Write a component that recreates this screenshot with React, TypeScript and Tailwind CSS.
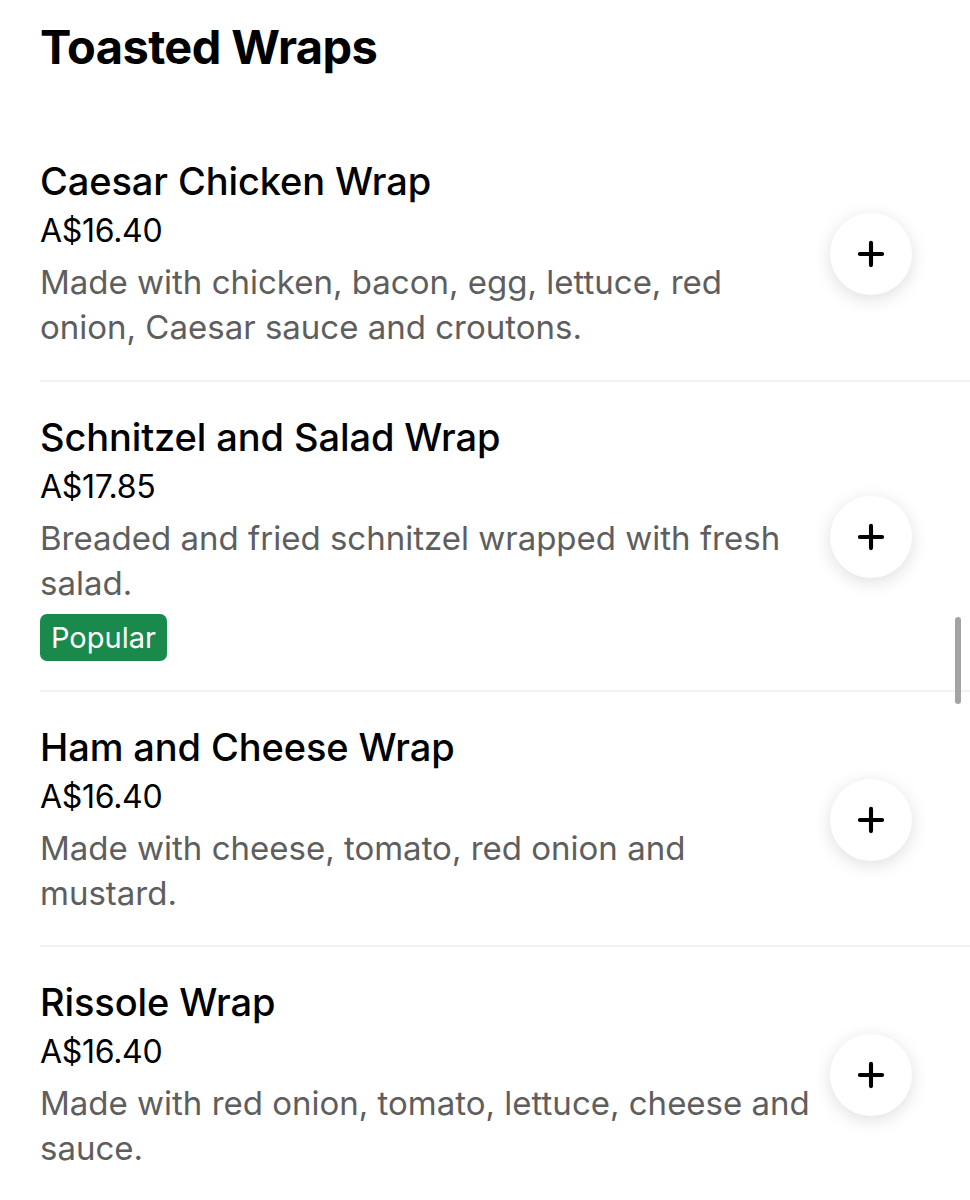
import { Plus } from "lucide-react";

type Item = {
  name: string;
  price: string;
  desc: string;
  popular?: boolean;
};

const items: Item[] = [
  {
    name: "Caesar Chicken Wrap",
    price: "A$16.40",
    desc: "Made with chicken, bacon, egg, lettuce, red onion, Caesar sauce and croutons.",
  },
  {
    name: "Schnitzel and Salad Wrap",
    price: "A$17.85",
    desc: "Breaded and fried schnitzel wrapped with fresh salad.",
    popular: true,
  },
  {
    name: "Ham and Cheese Wrap",
    price: "A$16.40",
    desc: "Made with cheese, tomato, red onion and mustard.",
  },
  {
    name: "Rissole Wrap",
    price: "A$16.40",
    desc: "Made with red onion, tomato, lettuce, cheese and sauce.",
  },
];

function MenuRow({ item, first }: { item: Item; first: boolean }) {
  return (
    <div className={first ? "flex items-center pb-[30px] pt-[27px] pr-[58px]" : "flex items-center pb-[29px] pt-[31px] pr-[58px] border-t-2 border-[#f1f1f1]"}>
      <div className="flex-1 min-w-0 pr-2">
        <div className="text-[38px] leading-[48px] font-medium text-black tracking-[-0.1px]">{item.name}</div>
        <div className="text-[32px] leading-[46px] text-black mt-[3px] tracking-[-0.3px]">{item.price}</div>
        <div className="text-[33px] leading-[45px] text-[#5e5e5e] mt-[6px]">{item.desc}</div>
        {item.popular && (
          <div className="mt-[8px]">
            <span className="inline-flex items-center h-[47px] px-[11px] rounded-[7px] bg-[#198a4b] text-white text-[29px]">
              Popular
            </span>
          </div>
        )}
      </div>
      <button className="w-[82px] h-[82px] shrink-0 rounded-full bg-white flex items-center justify-center shadow-[0_4px_18px_rgba(0,0,0,0.13)]">
        <Plus className="w-[38px] h-[38px] text-black" strokeWidth={2.6} />
      </button>
    </div>
  );
}

export default function App() {
  return (
    <div className="relative w-[970px] h-[1200px] overflow-hidden bg-white font-['Inter',sans-serif]">
      <div className="pl-[40px]">
        <h1 className="text-[47px] leading-[60px] font-bold text-black pt-[17px] pb-[53px] tracking-[-0.6px]">
          Toasted Wraps
        </h1>
        {items.map((it, i) => (
          <MenuRow key={it.name} item={it} first={i === 0} />
        ))}
        <div className="border-t-2 border-[#f1f1f1]" />
      </div>
      <div className="absolute right-[9px] top-[617px] w-[6px] h-[87px] rounded-full bg-[#a3a3a3]" />
    </div>
  );
}
